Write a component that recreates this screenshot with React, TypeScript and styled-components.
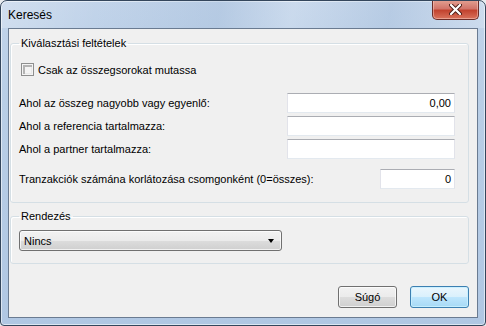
import React from "react"
import styled, { createGlobalStyle } from "styled-components"

const GlobalStyle = createGlobalStyle`
  html, body {
    margin: 0;
    padding: 0;
    background: #e9ecef;
  }
  body {
    font-family: "Liberation Sans", Arial, sans-serif;
    font-size: 11px;
    color: #000;
  }
`

const Window = styled.div`
  box-sizing: border-box;
  width: 486px;
  height: 326px;
  display: flex;
  flex-direction: column;
  border: 1px solid #34465c;
  border-radius: 7px 7px 4px 4px;
  background: linear-gradient(to bottom, #c2d4ea 0%, #b9cee6 30%, #b0c7e3 100%);
  box-shadow: inset 0 0 0 1px rgba(255, 255, 255, 0.55);
  overflow: hidden;
`

const TitleBar = styled.div`
  height: 27px;
  display: flex;
  align-items: flex-start;
  padding-left: 7px;
  background: linear-gradient(
    100deg,
    rgba(255, 255, 255, 0.25) 0%,
    rgba(255, 255, 255, 0) 20%,
    rgba(160, 185, 215, 0.35) 45%,
    rgba(255, 255, 255, 0.15) 60%,
    rgba(160, 185, 215, 0.3) 80%,
    rgba(255, 255, 255, 0.2) 100%
  );
`

const Title = styled.span`
  flex: 1;
  margin-top: 7px;
  font-size: 12px;
  line-height: 14px;
  color: #000;
`

const CloseButton = styled.div`
  width: 45px;
  height: 19px;
  margin-right: 6px;
  margin-top: -1px;
  display: flex;
  align-items: center;
  justify-content: center;
  border: 1px solid #6d2d28;
  border-top: none;
  border-radius: 0 0 5px 5px;
  background: linear-gradient(to bottom, #e4a293 0%, #d2756a 45%, #c2432f 55%, #d9725c 100%);
  box-shadow: inset 0 0 0 1px rgba(255, 220, 210, 0.45);
`

const Client = styled.div`
  flex: 1;
  margin: 0 7px 7px 7px;
  border: 1px solid #6a7b91;
  background: #f0f0f0;
  display: flex;
  flex-direction: column;
  padding: 0 8px 0 1px;
`

// Windows-style group box; top margin and bottom padding vary per use
const GroupBox = styled.fieldset<{ $top: number; $bottom?: number }>`
  margin: ${(p) => p.$top}px 0 0 0;
  padding: 0 0 ${(p) => p.$bottom ?? 0}px 8px;
  border: 1px solid #d5dfe5;
  border-radius: 3px;
  box-shadow: inset 1px 1px 0 #fff;
  min-width: 0;
`

const Legend = styled.legend`
  margin-left: 0;
  padding: 0 2px;
  line-height: 14px;
  font-size: 11px;
`

const CheckRow = styled.label`
  display: flex;
  align-items: center;
  gap: 4px;
  margin: 13px 0 0 2px;
  height: 13px;
`

const CheckBox = styled.span`
  box-sizing: border-box;
  width: 13px;
  height: 13px;
  border: 1px solid #8e8f8f;
  background: #f4f4f4;
  box-shadow: inset 0 0 0 1px #f4f4f4, inset 2px 2px 0 1px #b4b4b4, inset -1px -1px 0 1px #e9e9e9;
`

const FieldList = styled.div`
  display: flex;
  flex-direction: column;
  gap: 3px;
  margin-top: 17px;
  padding-right: 13px;
`

const FieldRow = styled.div<{ $gap?: number }>`
  display: flex;
  align-items: center;
  justify-content: space-between;
  margin-top: ${(p) => p.$gap ?? 0}px;
`

const TextInput = styled.div<{ $width: number }>`
  box-sizing: border-box;
  width: ${(p) => p.$width}px;
  height: 20px;
  padding: 0 3px;
  display: flex;
  align-items: center;
  justify-content: flex-end;
  background: #fff;
  border: 1px solid #e2e3ea;
  border-top-color: #abadb3;
  border-bottom-color: #e3e9ef;
`

const Combo = styled.div`
  box-sizing: border-box;
  width: 263px;
  height: 21px;
  margin: 7px 0 12px 0;
  padding: 0 7px 0 4px;
  display: flex;
  align-items: center;
  justify-content: space-between;
  border: 1px solid #707070;
  border-radius: 3px;
  background: linear-gradient(to bottom, #f2f2f2 0%, #ebebeb 50%, #dddddd 50%, #cfcfcf 100%);
  box-shadow: inset 0 0 0 1px rgba(255, 255, 255, 0.7);
`

const Arrow = styled.span`
  width: 0;
  height: 0;
  border-left: 3.5px solid transparent;
  border-right: 3.5px solid transparent;
  border-top: 4px solid #000;
`

const ButtonRow = styled.div`
  display: flex;
  justify-content: flex-end;
  gap: 13px;
  margin-top: 22px;
`

const Button = styled.div<{ $default?: boolean }>`
  box-sizing: border-box;
  width: 59px;
  height: 22px;
  display: flex;
  align-items: center;
  justify-content: center;
  border: 1px solid ${(p) => (p.$default ? "#3c7fb1" : "#707070")};
  border-radius: 3px;
  background: ${(p) =>
    p.$default
      ? "linear-gradient(to bottom, #eaf6fd 0%, #d9f0fc 50%, #bee6fd 50%, #a7d9f5 100%)"
      : "linear-gradient(to bottom, #f2f2f2 0%, #ebebeb 50%, #dddddd 50%, #cfcfcf 100%)"};
  box-shadow: inset 0 0 0 1px ${(p) => (p.$default ? "rgba(200, 240, 255, 0.9)" : "rgba(255, 255, 255, 0.7)")};
`

const App = () => {
  return (
    <>
      <GlobalStyle />
      <Window>
        <TitleBar>
          <Title>Keresés</Title>
          <CloseButton>
            <svg width="13" height="11" viewBox="0 0 13 11">
              <path
                d="M2 1 L11 10 M11 1 L2 10"
                stroke="#4a1c16"
                strokeWidth="4"
                strokeLinecap="round"
              />
              <path
                d="M2 1 L11 10 M11 1 L2 10"
                stroke="#fff"
                strokeWidth="2.2"
                strokeLinecap="round"
              />
            </svg>
          </CloseButton>
        </TitleBar>
        <Client>
          <GroupBox $top={7} $bottom={13}>
            <Legend>Kiválasztási feltételek</Legend>
            <CheckRow>
              <CheckBox />
              <span>Csak az összegsorokat mutassa</span>
            </CheckRow>
            <FieldList>
              <FieldRow>
                <span>Ahol az összeg nagyobb vagy egyenlő:</span>
                <TextInput $width={168}>0,00</TextInput>
              </FieldRow>
              <FieldRow>
                <span>Ahol a referencia tartalmazza:</span>
                <TextInput $width={168} />
              </FieldRow>
              <FieldRow>
                <span>Ahol a partner tartalmazza:</span>
                <TextInput $width={168} />
              </FieldRow>
              <FieldRow $gap={7}>
                <span>Tranzakciók számána korlátozása csomgonként (0=összes):</span>
                <TextInput $width={75}>0</TextInput>
              </FieldRow>
            </FieldList>
          </GroupBox>
          <GroupBox $top={6}>
            <Legend>Rendezés</Legend>
            <Combo>
              <span>Nincs</span>
              <Arrow />
            </Combo>
          </GroupBox>
          <ButtonRow>
            <Button>Súgó</Button>
            <Button $default>OK</Button>
          </ButtonRow>
        </Client>
      </Window>
    </>
  )
}

export default App
